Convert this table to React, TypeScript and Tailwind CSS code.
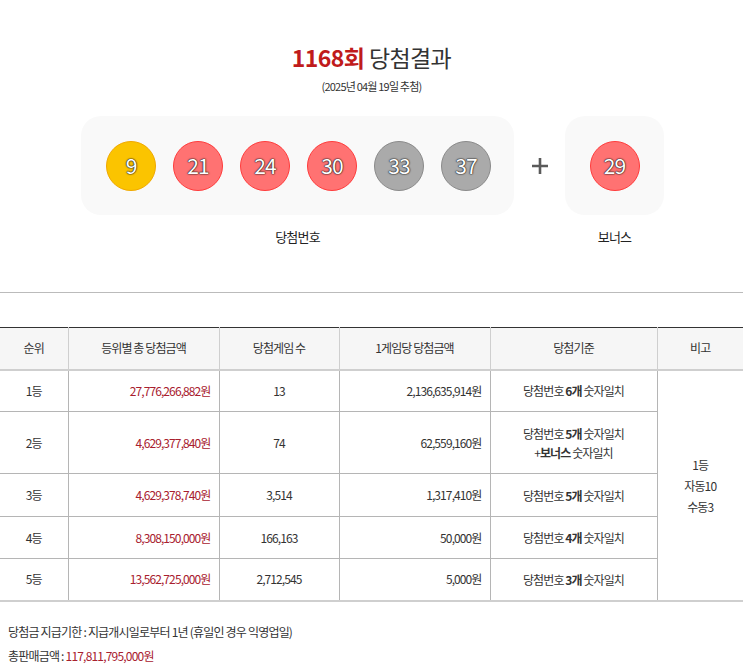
import React from "react";

const FONT = "font-['Noto_Sans_CJK_KR','Noto_Sans',sans-serif]";

type Ball = { n: number; color: "y" | "r" | "g" };

const BALLS: Ball[] = [
  { n: 9, color: "y" },
  { n: 21, color: "r" },
  { n: 24, color: "r" },
  { n: 30, color: "r" },
  { n: 33, color: "g" },
  { n: 37, color: "g" },
];

const BALL_CLS = {
  y: "bg-[#fbc400] border-[#f0a800]",
  r: "bg-[#ff7272] border-[#ff3b3b]",
  g: "bg-[#aaaaaa] border-[#8a8a8a]",
};

function LottoBall({ n, color }: Ball) {
  return (
    <div
      className={`w-[50px] h-[50px] rounded-full border flex items-center justify-center text-white text-[21px] tracking-[-1px] ${BALL_CLS[color]}`}
      style={{ textShadow: "0 0 2px #222, 0 0 1px #222, 0 0 1px #222" }}
    >
      {n}
    </div>
  );
}

const ROWS = [
  { rank: "1등", total: "27,776,266,882원", games: "13", per: "2,136,635,914원", rule: ["당첨번호 <b>6개</b> 숫자일치"], h: "h-[42px]" },
  { rank: "2등", total: "4,629,377,840원", games: "74", per: "62,559,160원", rule: ["당첨번호 <b>5개</b> 숫자일치", "+<b>보너스</b> 숫자일치"], h: "h-[62px]" },
  { rank: "3등", total: "4,629,378,740원", games: "3,514", per: "1,317,410원", rule: ["당첨번호 <b>5개</b> 숫자일치"], h: "h-[43px]" },
  { rank: "4등", total: "8,308,150,000원", games: "166,163", per: "50,000원", rule: ["당첨번호 <b>4개</b> 숫자일치"], h: "h-[42px]" },
  { rank: "5등", total: "13,562,725,000원", games: "2,712,545", per: "5,000원", rule: ["당첨번호 <b>3개</b> 숫자일치"], h: "h-[42px]" },
];

function Rule({ text }: { text: string }) {
  // split out the bold bits
  const parts = text.split(/(<b>.*?<\/b>)/);
  return (
    <div>
      {parts.map((p, i) =>
        p.startsWith("<b>") ? (
          <span key={i} className="font-bold">{p.replace(/<\/?b>/g, "")}</span>
        ) : (
          <span key={i}>{p}</span>
        )
      )}
    </div>
  );
}

export default function App() {
  return (
    <div className={`${FONT} w-[743px] h-[664px] bg-white text-[#333] overflow-hidden`}>
      {/* Title */}
      <div className="pt-[40px] text-center">
        <h2 className="text-[23px] leading-[34px] tracking-[-0.6px]">
          <strong className="text-[#c01b1b] font-bold">1168회</strong>{" "}
          <span className="text-[#333]">당첨결과</span>
        </h2>
        <p className="mt-[4px] text-[11px] leading-[16px] tracking-[-0.8px] text-[#333]">(2025년 04월 19일 추첨)</p>
      </div>

      {/* Balls */}
      <div className="mt-[22px] flex items-start">
        <div className="ml-[81px] flex flex-col items-center">
          <div className="w-[433px] h-[99px] rounded-[20px] bg-[#f9f9f9] flex items-center pl-[25px] gap-[17px]">
            {BALLS.map((b) => (
              <LottoBall key={b.n} {...b} />
            ))}
          </div>
          <p className="mt-[13px] text-[13px] leading-[18px] tracking-[-0.8px] text-[#222]">당첨번호</p>
        </div>
        <div className="w-[51px] h-[99px] flex items-center justify-center">
          <svg width="18" height="18" viewBox="0 0 18 18">
            <path d="M9 1v16M1 9h16" stroke="#5a5a5a" strokeWidth="2.6" />
          </svg>
        </div>
        <div className="flex flex-col items-center">
          <div className="w-[99px] h-[99px] rounded-[20px] bg-[#f9f9f9] flex items-center justify-center">
            <LottoBall n={29} color="r" />
          </div>
          <p className="mt-[13px] text-[13px] leading-[18px] tracking-[-0.8px] text-[#222]">보너스</p>
        </div>
      </div>

      <div className="mt-[46px] border-t border-[#bbbbbb]" />

      {/* Table */}
      <table className="mt-[34px] w-[743px] border-collapse table-fixed text-[12px] tracking-[-0.9px] text-[#333] border-t border-[#333]">
        <colgroup>
          <col className="w-[68px]" />
          <col className="w-[151px]" />
          <col className="w-[120px]" />
          <col className="w-[151px]" />
          <col className="w-[167px]" />
          <col className="w-[86px]" />
        </colgroup>
        <thead>
          <tr className="h-[42px] bg-[#f6f6f6] border-b-2 border-[#cfcfcf]">
            <th className="font-normal text-center border-r border-[#cfcfcf]">순위</th>
            <th className="font-normal text-center border-r border-[#cfcfcf]">등위별 총 당첨금액</th>
            <th className="font-normal text-center border-r border-[#cfcfcf]">당첨게임 수</th>
            <th className="font-normal text-center border-r border-[#cfcfcf]">1게임당 당첨금액</th>
            <th className="font-normal text-center border-r border-[#cfcfcf]">당첨기준</th>
            <th className="font-normal text-center">비고</th>
          </tr>
        </thead>
        <tbody>
          {ROWS.map((r, i) => (
            <tr key={r.rank} className={`${r.h} ${i < ROWS.length - 1 ? "border-b border-[#b5b5b5]" : "border-b-2 border-[#cfcfcf]"}`}>
              <td className="text-center border-r border-[#b5b5b5]">{r.rank}</td>
              <td className="text-right pr-[8px] text-[#a8202e] border-r border-[#b5b5b5]">{r.total}</td>
              <td className="text-center border-r border-[#b5b5b5]">{r.games}</td>
              <td className="text-right pr-[8px] border-r border-[#b5b5b5]">{r.per}</td>
              <td className="text-center leading-[19px] border-r border-[#b5b5b5]">
                {r.rule.map((t) => (
                  <Rule key={t} text={t} />
                ))}
              </td>
              {i === 0 && (
                <td rowSpan={5} className="text-center leading-[21px] align-middle">
                  <div>1등</div>
                  <div>자동10</div>
                  <div>수동3</div>
                </td>
              )}
            </tr>
          ))}
        </tbody>
      </table>

      {/* Footer notes */}
      <div className="mt-[18px] pl-[8px] text-[12px] tracking-[-0.8px] text-[#333] leading-[24px]">
        <p>당첨금 지급기한 : 지급개시일로부터 1년 (휴일인 경우 익영업일)</p>
        <p>
          총판매금액 : <span className="text-[#a8202e]">117,811,795,000원</span>
        </p>
      </div>
    </div>
  );
}
